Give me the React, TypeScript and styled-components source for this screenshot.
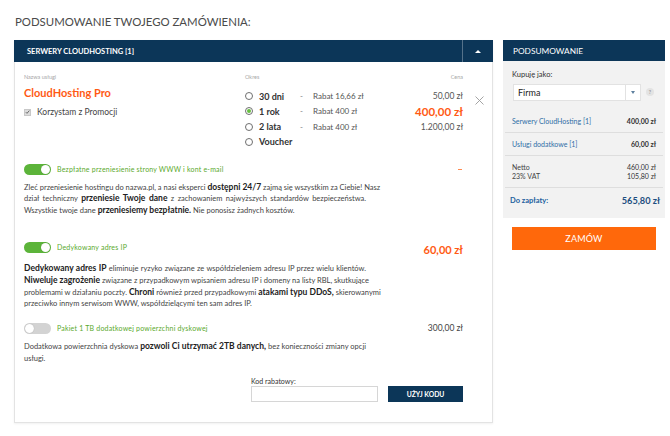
import React from "react";
import styled, { createGlobalStyle } from "styled-components";

const FONT = `Lato, "Open Sans", "DejaVu Sans", sans-serif`;
const NAVY = "#0c3658";
const ORANGE = "#ff5a14";
const GREEN = "#5aa92d";

const Global = createGlobalStyle`
  html, body { margin: 0; padding: 0; background: #fff; }
  body { font-family: ${FONT}; color: #333; width: 670px; height: 436px; overflow: hidden; }
  * { box-sizing: border-box; }
`;

const Page = styled.div`
  padding: 14px 5px 0 14px;
`;

const Title = styled.h1`
  margin: 0 0 11px 1px;
  font-size: 11.4px;
  line-height: 15px;
  font-weight: 400;
  color: #4a4a4a;
  text-transform: uppercase;
`;

const Columns = styled.div`
  display: flex;
  align-items: flex-start;
  gap: 10px;
`;

const MainPanel = styled.section`
  width: 479px;
  border: 1px solid #e3e3e3;
  border-top: none;
  background: #fff;
  box-shadow: 0 1px 2px rgba(0, 0, 0, 0.06);
`;

const PanelHeader = styled.header`
  display: flex;
  height: 22px;
  background: ${NAVY};
  margin: 0 -1px;
`;

const HeaderTitle = styled.div`
  flex: 1;
  display: flex;
  align-items: center;
  padding-left: 13px;
  color: #fff;
  font-size: 7.5px;
  font-weight: 700;
  text-transform: uppercase;
`;

const CollapseCell = styled.div`
  width: 31px;
  display: flex;
  align-items: center;
  justify-content: center;
  border-left: 1px solid rgba(255, 255, 255, 0.3);
`;

const CaretUp = styled.span`
  width: 0;
  height: 0;
  border-left: 3px solid transparent;
  border-right: 3px solid transparent;
  border-bottom: 3px solid #fff;
`;

const Body = styled.div`
  padding: 0 0 20px 9px;
`;

const ProductRow = styled.div`
  display: grid;
  grid-template-columns: 221px 1fr 29px;
  padding-top: 11px;
`;

const NameCol = styled.div`
  display: flex;
  flex-direction: column;
  align-items: flex-start;
`;

const TinyLabel = styled.div`
  font-size: 5.5px;
  line-height: 8px;
  color: #a8a8a8;
`;

const ProductName = styled.div`
  margin-top: 5px;
  font-size: 11px;
  line-height: 14px;
  font-weight: 700;
  color: ${ORANGE};
`;

const PromoRow = styled.div`
  margin-top: 6px;
  height: 12px;
  display: flex;
  align-items: center;
  gap: 6px;
  font-size: 8.5px;
  color: #444;
`;

const CheckBox = styled.span`
  width: 7px;
  height: 7px;
  background: #dcdcdc;
  border: 1px solid #c8c8c8;
  display: flex;
  align-items: center;
  justify-content: center;
`;

const PeriodCol = styled.div`
  display: flex;
  flex-direction: column;
`;

const PeriodHead = styled.div`
  display: flex;
  justify-content: space-between;
`;

const PeriodGrid = styled.div`
  margin-top: 7.4px;
  display: grid;
  grid-template-columns: 55px 13px 1fr auto;
  grid-auto-rows: 15.3px;
  align-items: center;
`;

const RadioCell = styled.label`
  display: flex;
  align-items: center;
  gap: 6px;
`;

const Radio = styled.span<{ $checked?: boolean }>`
  width: 8px;
  height: 8px;
  border-radius: 50%;
  border: 1px solid #6f6f6f;
  background: #fff;
  display: flex;
  align-items: center;
  justify-content: center;
  &::after {
    content: "";
    width: 4px;
    height: 4px;
    border-radius: 50%;
    background: ${(p) => (p.$checked ? "#66bf3f" : "transparent")};
  }
`;

const PeriodName = styled.span`
  font-size: 9px;
  font-weight: 700;
  color: #333;
`;

const Dash = styled.span`
  font-size: 8px;
  color: #777;
`;

const Discount = styled.span`
  font-size: 8px;
  color: #555;
`;

const Price = styled.span<{ $active?: boolean }>`
  text-align: right;
  font-size: ${(p) => (p.$active ? "11.5px" : "8.5px")};
  font-weight: ${(p) => (p.$active ? 700 : 400)};
  color: ${(p) => (p.$active ? ORANGE : "#555")};
`;

const CloseCell = styled.div`
  margin-top: 16px;
  padding-left: 12px;
`;

const Section = styled.div<{ $mt: number }>`
  margin-top: ${(p) => p.$mt}px;
  padding-right: 29px;
`;

const SectionHead = styled.div`
  height: 12px;
  display: flex;
  align-items: center;
`;

const Toggle = styled.span<{ $on?: boolean }>`
  position: relative;
  width: 27px;
  height: 11px;
  border-radius: 6px;
  background: ${(p) => (p.$on ? "#5cb43a" : "#d3d3d3")};
  flex: none;
  &::after {
    content: "";
    position: absolute;
    top: 1px;
    ${(p) => (p.$on ? "right: 1px;" : "left: 1px;")}
    width: 9px;
    height: 9px;
    border-radius: 50%;
    background: #fff;
    box-shadow: 0 0 1px rgba(0, 0, 0, 0.3);
  }
`;

const ToggleLabel = styled.span`
  margin-left: 6px;
  flex: 1;
  font-size: 7px;
  letter-spacing: 0.2px;
  color: ${GREEN};
`;

const HeadPrice = styled.span<{ $accent?: boolean }>`
  font-size: ${(p) => (p.$accent ? "11px" : "8.5px")};
  font-weight: ${(p) => (p.$accent ? 700 : 400)};
  color: ${(p) => (p.$accent ? ORANGE : "#444")};
  padding-top: ${(p) => (p.$accent ? "5px" : "0")};
`;

const HeadDash = styled.span`
  width: 4px;
  height: 1px;
  margin-right: 1px;
  background: #ff8a50;
`;

const Para = styled.div<{ $gap: number }>`
  margin-top: ${(p) => p.$gap}px;
  width: 342px;
  font-size: 7.5px;
  line-height: 11.8px;
  color: #444;
`;

const Line = styled.span<{ $last?: boolean }>`
  display: block;
  height: 11.8px;
  text-align: justify;
  text-align-last: ${(p) => (p.$last ? "left" : "justify")};
  white-space: nowrap;
`;

const B = styled.b`
  font-size: 8.5px;
  line-height: 1;
  font-weight: 700;
  color: #222;
`;

const CouponRow = styled.div`
  margin-top: 12px;
  padding-right: 29px;
  display: flex;
  justify-content: flex-end;
  align-items: flex-end;
  gap: 10px;
`;

const Field = styled.label`
  display: flex;
  flex-direction: column;
`;

const FieldLabel = styled.span`
  font-size: 7px;
  line-height: 9px;
  color: #333;
`;

const CodeInput = styled.input`
  margin-top: 0.5px;
  width: 127px;
  height: 15.5px;
  border: 1px solid #d6d6d6;
  background: #fff;
  outline: none;
`;

const CodeButton = styled.button`
  width: 75px;
  height: 16px;
  border: none;
  background: ${NAVY};
  color: #fff;
  font-family: ${FONT};
  font-size: 6.8px;
  font-weight: 700;
  text-transform: uppercase;
  padding: 0;
`;

const SideColumn = styled.aside`
  width: 162px;
  display: flex;
  flex-direction: column;
`;

const SideHeader = styled.header`
  height: 21px;
  display: flex;
  align-items: center;
  padding-left: 10px;
  background: ${NAVY};
  color: #fff;
  font-size: 8.3px;
  text-transform: uppercase;
`;

const SideBody = styled.div`
  background: #f2f2f2;
  padding: 8.5px 0 0;
`;

const BuyerLabel = styled.div`
  padding-left: 9px;
  font-size: 7.5px;
  line-height: 9px;
  color: #333;
`;

const SelectRow = styled.div`
  margin-top: 5px;
  padding-left: 10px;
  display: flex;
  align-items: center;
  gap: 5px;
`;

const Select = styled.div`
  width: 128px;
  height: 17px;
  display: flex;
  background: #fff;
  border: 1px solid #e2e2e2;
`;

const SelectValue = styled.span`
  flex: 1;
  display: flex;
  align-items: center;
  padding-left: 4px;
  font-size: 9px;
  color: #222;
`;

const SelectCaret = styled.span`
  width: 15px;
  display: flex;
  align-items: center;
  justify-content: center;
  border-left: 1px solid #e2e2e2;
  &::after {
    content: "";
    border-left: 2.5px solid transparent;
    border-right: 2.5px solid transparent;
    border-top: 3px solid #5d7f9e;
  }
`;

const Help = styled.span`
  width: 8px;
  height: 8px;
  border-radius: 50%;
  background: #e3e3e3;
  color: #999;
  font-size: 5px;
  line-height: 8px;
  text-align: center;
  font-weight: 700;
`;

const SumList = styled.div`
  margin-top: 9.5px;
`;

const SumRow = styled.div`
  margin: 0 2px;
  padding: 7px 7px 6px;
  border-bottom: 1px solid #dedede;
  display: flex;
  justify-content: space-between;
  font-size: 7px;
  line-height: 9px;
`;

const SumCol = styled.div<{ $align?: string }>`
  display: flex;
  flex-direction: column;
  align-items: ${(p) => p.$align || "flex-start"};
`;

const SumLabel = styled.span<{ $link?: boolean }>`
  color: ${(p) => (p.$link ? "#2f6ea6" : "#444")};
`;

const SumValue = styled.span<{ $bold?: boolean }>`
  color: #333;
  font-weight: ${(p) => (p.$bold ? 700 : 400)};
`;

const TotalRow = styled.div`
  padding: 5.5px 5px 11.5px 7px;
  display: flex;
  justify-content: space-between;
  align-items: center;
  line-height: 13px;
`;

const TotalLabel = styled.span`
  font-size: 7.5px;
  font-weight: 700;
  color: #1b5e9e;
`;

const TotalValue = styled.span`
  font-size: 9.2px;
  font-weight: 700;
  color: #1d4e80;
`;

const OrderButton = styled.button`
  margin: 9px 9px 0;
  height: 23px;
  border: none;
  background: #ff680b;
  color: #fff;
  font-family: ${FONT};
  font-size: 9px;
  text-transform: uppercase;
  letter-spacing: 0.2px;
`;

const periods = [
  { name: "30 dni", discount: "Rabat 16,66 zł", price: "50,00 zł" },
  { name: "1 rok", discount: "Rabat 400 zł", price: "400,00 zł", checked: true },
  { name: "2 lata", discount: "Rabat 400 zł", price: "1.200,00 zł" },
  { name: "Voucher", discount: "", price: "" },
];

const CloseIcon = () => (
  <svg width="9" height="9" viewBox="0 0 9 9">
    <path d="M0.5 0.5L8.5 8.5M8.5 0.5L0.5 8.5" stroke="#9a9a9a" strokeWidth="0.9" fill="none" />
  </svg>
);

const CheckMark = () => (
  <svg width="6" height="6" viewBox="0 0 6 6">
    <path d="M1 3.2L2.4 4.6L5.2 1.3" stroke="#555" strokeWidth="1" fill="none" />
  </svg>
);

export default function App() {
  return (
    <>
      <Global />
      <Page>
        <Title>Podsumowanie twojego zamówienia:</Title>
        <Columns>
          <MainPanel>
            <PanelHeader>
              <HeaderTitle>Serwery CloudHosting [1]</HeaderTitle>
              <CollapseCell>
                <CaretUp />
              </CollapseCell>
            </PanelHeader>
            <Body>
              <ProductRow>
                <NameCol>
                  <TinyLabel>Nazwa usługi</TinyLabel>
                  <ProductName>CloudHosting Pro</ProductName>
                  <PromoRow>
                    <CheckBox>
                      <CheckMark />
                    </CheckBox>
                    <span>Korzystam z Promocji</span>
                  </PromoRow>
                </NameCol>
                <PeriodCol>
                  <PeriodHead>
                    <TinyLabel>Okres</TinyLabel>
                    <TinyLabel>Cena</TinyLabel>
                  </PeriodHead>
                  <PeriodGrid>
                    {periods.map((p) => (
                      <React.Fragment key={p.name}>
                        <RadioCell>
                          <Radio $checked={p.checked} />
                          <PeriodName>{p.name}</PeriodName>
                        </RadioCell>
                        <Dash>{p.discount ? "-" : ""}</Dash>
                        <Discount>{p.discount}</Discount>
                        <Price $active={p.checked}>{p.price}</Price>
                      </React.Fragment>
                    ))}
                  </PeriodGrid>
                </PeriodCol>
                <CloseCell>
                  <CloseIcon />
                </CloseCell>
              </ProductRow>

              <Section $mt={13.5}>
                <SectionHead>
                  <Toggle $on />
                  <ToggleLabel>Bezpłatne przeniesienie strony WWW i kont e-mail</ToggleLabel>
                  <HeadDash />
                </SectionHead>
                <Para $gap={6.6}>
                  <Line>
                    Zleć przeniesienie hostingu do nazwa.pl, a nasi eksperci <B>dostępni 24/7</B> zajmą się wszystkim za Ciebie! Nasz
                  </Line>
                  <Line>
                    dział techniczny <B>przeniesie Twoje dane</B> z zachowaniem najwyższych standardów bezpieczeństwa.
                  </Line>
                  <Line $last>
                    Wszystkie twoje dane <B>przeniesiemy bezpłatnie.</B> Nie ponosisz żadnych kosztów.
                  </Line>
                </Para>
              </Section>

              <Section $mt={24}>
                <SectionHead>
                  <Toggle $on />
                  <ToggleLabel>Dedykowany adres IP</ToggleLabel>
                  <HeadPrice $accent>60,00 zł</HeadPrice>
                </SectionHead>
                <Para $gap={10}>
                  <Line>
                    <B>Dedykowany adres IP</B> eliminuje ryzyko związane ze współdzieleniem adresu IP przez wielu klientów.
                  </Line>
                  <Line>
                    <B>Niweluje zagrożenie</B> związane z przypadkowym wpisaniem adresu IP i domeny na listy RBL, skutkujące
                  </Line>
                  <Line>
                    problemami w działaniu poczty. <B>Chroni</B> również przed przypadkowymi <B>atakami typu DDoS,</B> skierowanymi
                  </Line>
                  <Line $last>przeciwko innym serwisom WWW, współdzielącymi ten sam adres IP.</Line>
                </Para>
              </Section>

              <Section $mt={12}>
                <SectionHead>
                  <Toggle />
                  <ToggleLabel>Pakiet 1 TB dodatkowej powierzchni dyskowej</ToggleLabel>
                  <HeadPrice>300,00 zł</HeadPrice>
                </SectionHead>
                <Para $gap={6.7}>
                  <Line>
                    Dodatkowa powierzchnia dyskowa <B>pozwoli Ci utrzymać 2TB danych,</B> bez konieczności zmiany opcji
                  </Line>
                  <Line $last>usługi.</Line>
                </Para>
              </Section>

              <CouponRow>
                <Field>
                  <FieldLabel>Kod rabatowy:</FieldLabel>
                  <CodeInput type="text" />
                </Field>
                <CodeButton>Użyj kodu</CodeButton>
              </CouponRow>
            </Body>
          </MainPanel>

          <SideColumn>
            <SideHeader>Podsumowanie</SideHeader>
            <SideBody>
              <BuyerLabel>Kupuję jako:</BuyerLabel>
              <SelectRow>
                <Select>
                  <SelectValue>Firma</SelectValue>
                  <SelectCaret />
                </Select>
                <Help>?</Help>
              </SelectRow>
              <SumList>
                <SumRow>
                  <SumLabel $link>Serwery CloudHosting [1]</SumLabel>
                  <SumValue $bold>400,00 zł</SumValue>
                </SumRow>
                <SumRow>
                  <SumLabel $link>Usługi dodatkowe [1]</SumLabel>
                  <SumValue $bold>60,00 zł</SumValue>
                </SumRow>
                <SumRow>
                  <SumCol>
                    <SumLabel>Netto</SumLabel>
                    <SumLabel>23% VAT</SumLabel>
                  </SumCol>
                  <SumCol $align="flex-end">
                    <SumValue>460,00 zł</SumValue>
                    <SumValue>105,80 zł</SumValue>
                  </SumCol>
                </SumRow>
              </SumList>
              <TotalRow>
                <TotalLabel>Do zapłaty:</TotalLabel>
                <TotalValue>565,80 zł</TotalValue>
              </TotalRow>
            </SideBody>
            <OrderButton>Zamów</OrderButton>
          </SideColumn>
        </Columns>
      </Page>
    </>
  );
}
